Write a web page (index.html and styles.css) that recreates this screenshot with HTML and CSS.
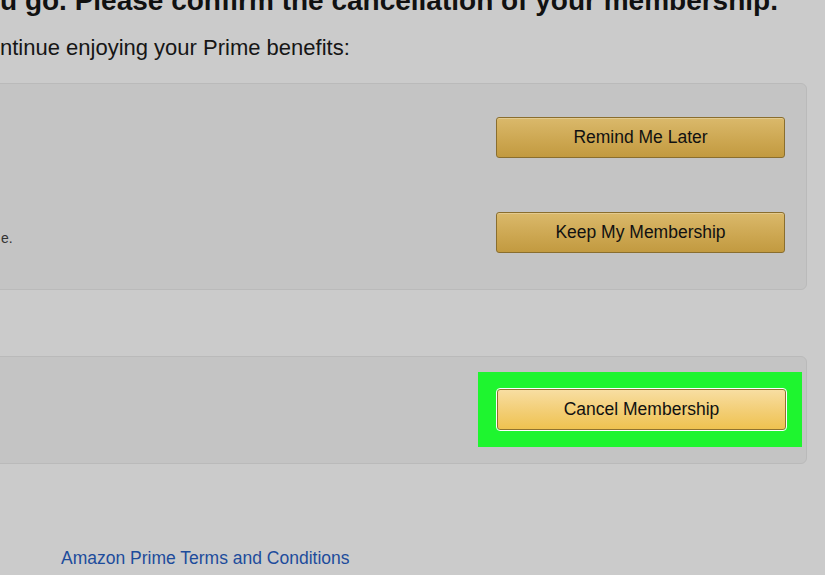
FILE: index.html
```html
<!DOCTYPE html>
<html>
<head>
<meta charset="utf-8">
<link rel="stylesheet" href="styles.css">
</head>
<body>
<div class="page">
  <h1 class="title">u go. Please confirm the cancellation of your membership.</h1>
  <p class="lead">ntinue enjoying your Prime benefits:</p>
  <div class="panel panel-keep">
    <div class="panel-text">
      <span class="note">e.</span>
    </div>
    <div class="actions">
      <button class="btn btn-gold">Remind Me Later</button>
      <button class="btn btn-gold">Keep My Membership</button>
    </div>
  </div>
  <div class="panel panel-cancel">
    <div class="panel-text"></div>
    <div class="highlight">
      <button class="btn btn-primary">Cancel Membership</button>
    </div>
  </div>
  <a class="terms" href="#">Amazon Prime Terms and Conditions</a>
</div>
</body>
</html>
```
FILE: styles.css
```css
html, body {
  margin: 0;
  padding: 0;
  background: #cbcbcb;
  width: 825px;
  height: 575px;
  overflow: hidden;
  font-family: "Liberation Sans", Arial, sans-serif;
}
.page {
  display: flex;
  flex-direction: column;
}
.title {
  margin: -15px 0 0 0;
  font-size: 28px;
  line-height: 32px;
  font-weight: bold;
  color: #111;
  white-space: nowrap;
}
.lead {
  margin: 18px 0 0 0;
  font-size: 22px;
  line-height: 26px;
  color: #161616;
}
.panel {
  width: 814px;
  margin-left: -7px;
  box-sizing: border-box;
  background: #c4c4c4;
  border: 1px solid #bababa;
  border-radius: 6px;
  display: flex;
  justify-content: space-between;
}
.panel-keep {
  margin-top: 22px;
  height: 207px;
  padding: 33px 21px 0 0;
}
.panel-text {
  display: flex;
  align-items: flex-end;
  padding-left: 7px;
}
.note {
  font-size: 14px;
  color: #333;
  padding-bottom: 43px;
}
.actions {
  display: flex;
  flex-direction: column;
  gap: 54px;
}
.btn {
  width: 289px;
  height: 41px;
  box-sizing: border-box;
  border-radius: 3px;
  font-family: "Liberation Sans", Arial, sans-serif;
  font-size: 17.5px;
  color: #111;
  padding: 0;
  cursor: pointer;
}
.btn-gold {
  border: 1px solid #8a6e2e;
  background: linear-gradient(to bottom, #dab96b 0%, #cca650 60%, #c29a40 100%);
  box-shadow: inset 0 1px 0 rgba(255,255,255,0.25);
}
.panel-cancel {
  margin-top: 66px;
  height: 108px;
  padding: 15px 4px 0 0;
}
.highlight {
  width: 324px;
  height: 75px;
  box-sizing: border-box;
  background: #1ef52f;
  padding: 17px 0 0 19px;
}
.btn-primary {
  border: 1px solid #8f7230;
  outline: 1px solid #ffffff;
  background: linear-gradient(to bottom, #f8dea2 0%, #f3cf78 50%, #efc250 100%);
}
.terms {
  margin: 84px 0 0 61px;
  font-size: 17.5px;
  line-height: 20px;
  color: #1d4c9c;
  text-decoration: none;
  align-self: flex-start;
}
```
